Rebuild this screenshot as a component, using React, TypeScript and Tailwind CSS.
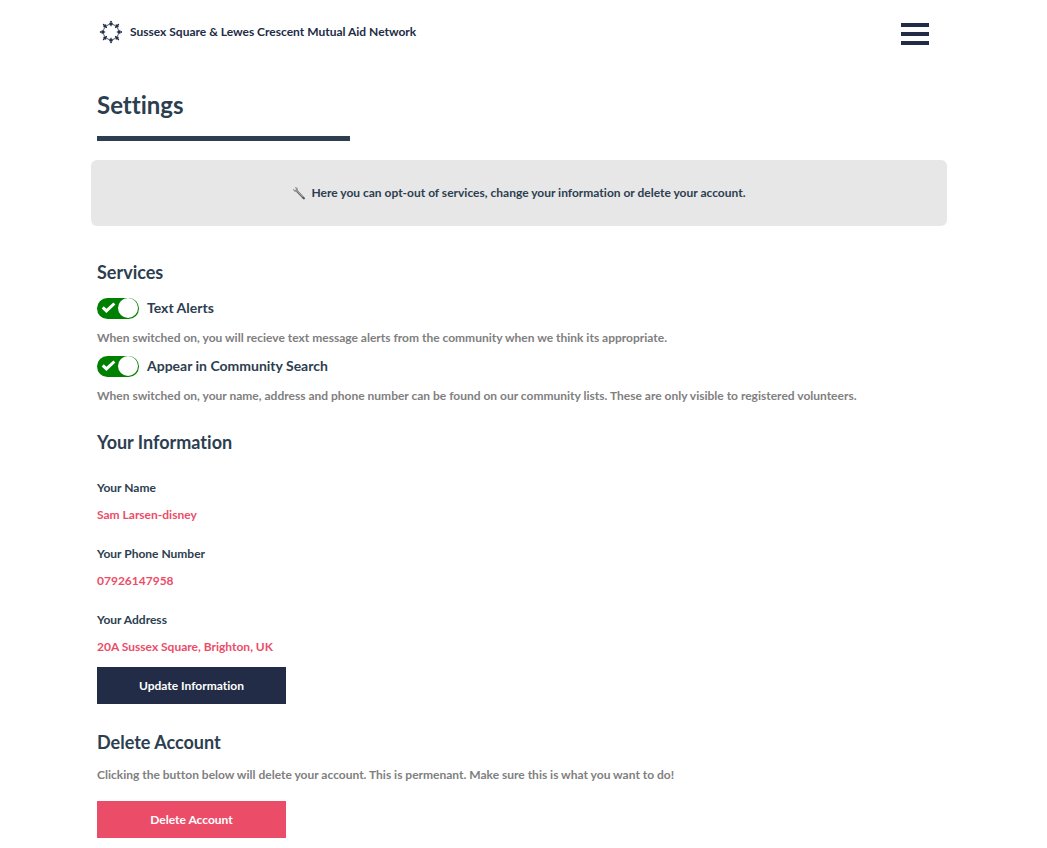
import { useState } from "react";

const rays = [0, 45, 90, 135, 180, 225, 270, 315];

function Logo() {
  return (
    <svg className="size-6 shrink-0" viewBox="0 0 24 24" fill="none" stroke="#222c46" aria-hidden="true">
      <circle cx="12" cy="12" r="7.7" strokeWidth="0.8" />
      {rays.map((angle) => (
        <g key={angle} transform={`rotate(${angle} 12 12)`}>
          <path d="M12 1.2V6.2" strokeWidth="1.1" />
          <path d="M10 2.9h4L12 5.3Z" fill="#222c46" strokeWidth="0.3" />
          <circle cx="12" cy="1.6" r="0.8" fill="#222c46" stroke="none" />
        </g>
      ))}
    </svg>
  );
}

function Wrench() {
  return (
    <svg className="size-[14px] shrink-0" viewBox="0 0 14 14" fill="none" aria-hidden="true">
      <path d="M4.6 4.8 11.8 12.2" stroke="#77716e" strokeWidth="2.2" strokeLinecap="round" />
      <path d="M4.5 4.4 11.5 11.5" stroke="#aaa8a7" strokeWidth="0.8" strokeLinecap="round" />
      <path d="M3.4 1 5.6 2.1 6 4.6 4.6 5.9 2.2 5.5.9 3.3 1.2 2.8 3 4.2 4.2 3.1 2.9 1.4Z" fill="#94918f" />
      <path d="m11.2 11.7.8.8" stroke="#594b49" strokeWidth="1.5" strokeLinecap="round" />
    </svg>
  );
}

function Toggle({ id, label, hint }: { id: string; label: string; hint: string }) {
  const [on, setOn] = useState(true);
  return (
    <div className="flex flex-col">
      <label htmlFor={id} className="relative flex h-6 cursor-pointer items-center gap-2 text-sm leading-6">
        <input
          id={id}
          type="checkbox"
          role="switch"
          checked={on}
          onChange={(e) => setOn(e.target.checked)}
          className="peer sr-only"
        />
        <span className="flex h-[21px] w-[42px] shrink-0 flex-row-reverse items-center justify-between rounded-full bg-gray-400 pr-2 pl-px peer-checked:flex-row peer-checked:bg-[#008000] peer-checked:pr-px peer-checked:pl-1 peer-focus-visible:outline-2">
          <svg className="h-3 w-[15px]" viewBox="0 0 15 12" fill="none" stroke="white" strokeWidth="3" aria-hidden="true">
            {on && <path d="m1.7 5.4 3.7 3.5L13.4 1.5" />}
          </svg>
          <span className="size-5 rounded-full bg-white" />
        </span>
        {label}
      </label>
      <p className="mt-2 leading-5 text-[#808080]">{hint}</p>
    </div>
  );
}

function Field({ label, value }: { label: string; value: string }) {
  return (
    <div>
      <dt className="leading-5">{label}</dt>
      <dd className="mt-[7px] leading-5 text-[#eb4d69]">{value}</dd>
    </div>
  );
}

export default function App() {
  return (
    <div className="min-h-screen bg-white pr-[100px] pl-[91px] font-['Lato',sans-serif] text-xs font-bold text-[#2c3e50] [font-variant-ligatures:none]">
      <header className="flex items-start justify-between pt-5 pr-[18px] pl-2">
        <a href="#" className="flex items-center gap-[7px] leading-6 text-[#222c46]">
          <Logo />
          Sussex Square &amp; Lewes Crescent Mutual Aid Network
        </a>
        <button type="button" aria-label="Menu" className="flex w-7 flex-col gap-[5px] pt-[3px]">
          <span className="h-1 w-full bg-[#222c46]" />
          <span className="h-1 w-full bg-[#222c46]" />
          <span className="h-1 w-full bg-[#222c46]" />
        </button>
      </header>

      <main>
        <h1 className="mt-11 px-1.5 text-2xl leading-8">Settings</h1>
        <div className="px-1.5">
          <div className="mt-[15px] h-[5px] w-[30%] bg-[#2c3e50]" />
        </div>

        <div className="mt-[19px] flex min-h-[66px] items-center justify-center gap-[5px] rounded-md bg-[#e7e7e7] px-4">
          <Wrench />
          <p className="leading-[22px]">
            Here you can opt-out of services, change your information or delete your account.
          </p>
        </div>

        <div className="px-1.5 pb-[10px]">
          <section className="mt-8">
            <h2 className="text-lg leading-7">Services</h2>
            <div className="mt-[10px] flex flex-col gap-[6px]">
              <Toggle
                id="text-alerts"
                label="Text Alerts"
                hint="When switched on, you will recieve text message alerts from the community when we think its appropriate."
              />
              <Toggle
                id="community-search"
                label="Appear in Community Search"
                hint="When switched on, your name, address and phone number can be found on our community lists. These are only visible to registered volunteers."
              />
            </div>
          </section>

          <section className="mt-[22px]">
            <h2 className="text-lg leading-7">Your Information</h2>
            <dl className="mt-[22px] flex flex-col gap-[19px]">
              <Field label="Your Name" value="Sam Larsen-disney" />
              <Field label="Your Phone Number" value="07926147958" />
              <Field label="Your Address" value="20A Sussex Square, Brighton, UK" />
            </dl>
            <button type="button" className="mt-[10px] h-[37px] w-[189px] bg-[#222c46] text-white">
              Update Information
            </button>
          </section>

          <section className="mt-6">
            <h2 className="text-lg leading-7">Delete Account</h2>
            <p className="mt-[9px] leading-5 text-[#808080]">
              Clicking the button below will delete your account. This is permenant. Make sure this is what you want to do!
            </p>
            <button type="button" className="mt-4 h-[37px] w-[189px] bg-[#eb4d69] text-white">
              Delete Account
            </button>
          </section>
        </div>
      </main>
    </div>
  );
}
